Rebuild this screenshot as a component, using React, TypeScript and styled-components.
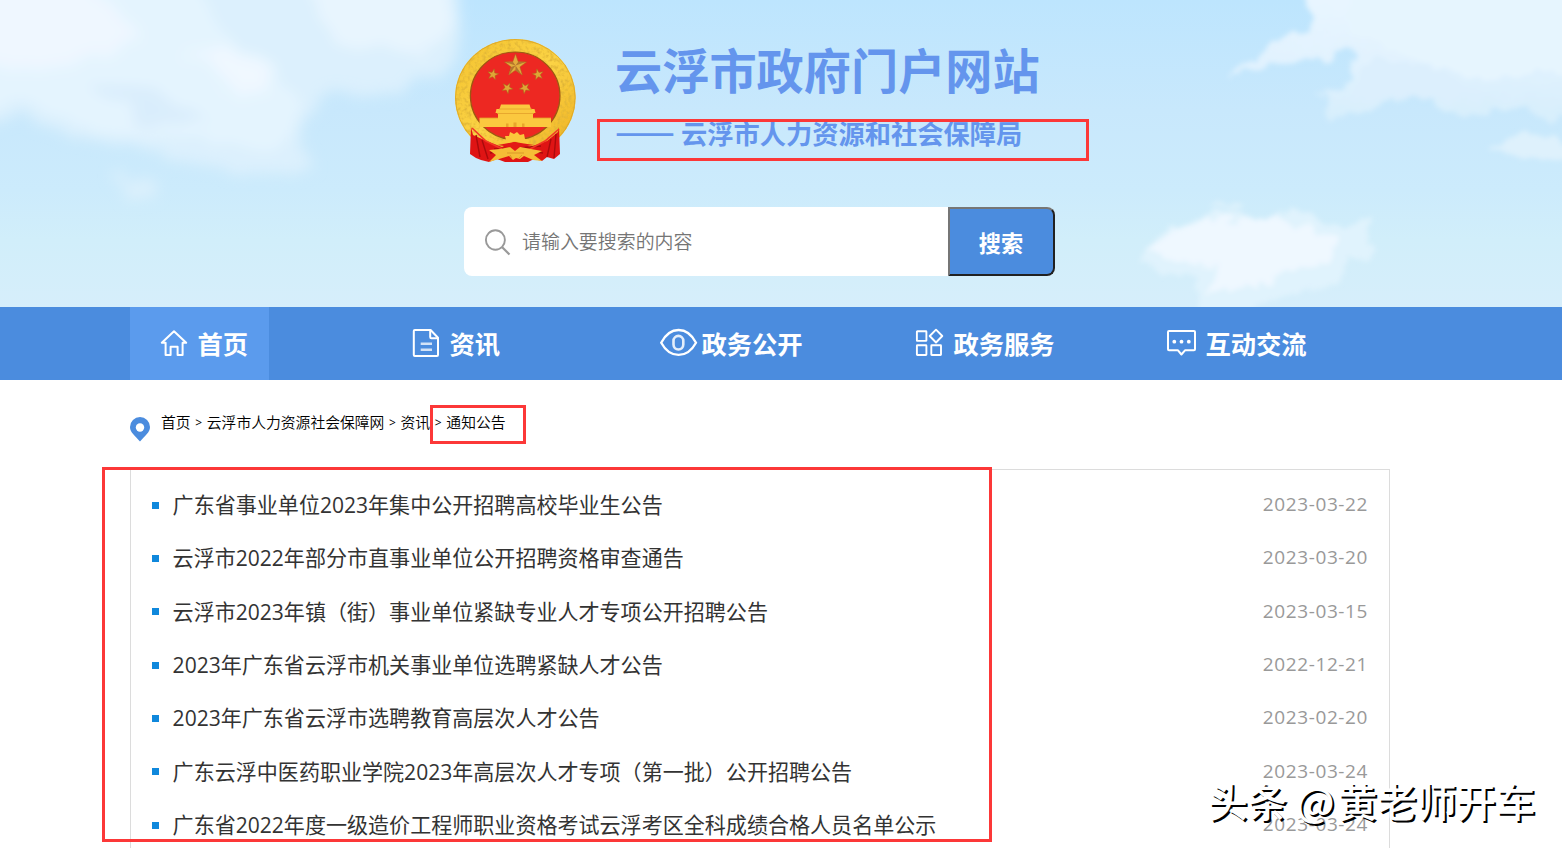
import React from "react";
import styled, { createGlobalStyle } from "styled-components";

const GlobalStyle = createGlobalStyle`
  * { box-sizing: border-box; }
  html, body { margin: 0; padding: 0; }
  body {
    background: #fff;
    font-family: "Open Sans", "Noto Sans CJK SC", sans-serif;
    overflow: hidden;
  }
`;

const Page = styled.div`
  position: relative;
  width: 1562px;
  height: 848px;
  overflow: hidden;
`;

const Header = styled.header`
  position: relative;
  height: 307px;
  background: linear-gradient(#bde5fe 0, #c8e8fc 110px, #ccebfc 190px, #d1eefa 240px, #d6eefb 307px);
`;

const Sky = styled.svg`
  position: absolute;
  inset: 0;
`;

const Brand = styled.div`
  position: relative;
  display: flex;
  gap: 25px;
  padding: 30px 0 0 440px;
`;

const BrandText = styled.div`
  padding-top: 8px;
  color: #6495ed;
  font-family: "Noto Sans CJK SC", sans-serif;
  font-weight: 700;
  white-space: nowrap;
`;

const SiteName = styled.h1`
  margin: 0;
  font-size: 47.2px;
  line-height: 62px;
`;

const Department = styled.div`
  display: flex;
  align-items: center;
  height: 40px;
  margin-top: 13px;
  font-size: 26.25px;
  line-height: 40px;
`;

const Dash = styled.span`
  width: 66px;
  padding-bottom: 6px;
  font-size: 35.5px;
  font-weight: 500;
`;

const Search = styled.form`
  position: relative;
  display: flex;
  align-items: center;
  width: 591px;
  height: 69px;
  margin: 32px 0 0 464px;
  padding-left: 20px;
  background: #fff;
  border-radius: 8px;
`;

const Placeholder = styled.span`
  flex: 1;
  padding: 0 0 2px 10px;
  color: #757575;
  font: 350 18.95px/28px "Noto Sans CJK SC", sans-serif;
`;

const SearchButton = styled.button`
  width: 107px;
  height: 69px;
  padding: 1px 1px 0 0;
  background: #4b8cde;
  border: 2px solid;
  border-color: #767676 #212121 #212121 #767676;
  border-radius: 0 8px 8px 0;
  color: #fff;
  font: 700 22.2px/30px "Noto Sans CJK SC", sans-serif;
`;

const Nav = styled.nav`
  display: flex;
  height: 73px;
  padding-left: 130px;
  background: #4b8cde;
`;

const NavCell = styled.div`
  width: 252px;
`;

const NavLink = styled.a<{ $active?: boolean }>`
  display: inline-flex;
  align-items: center;
  height: 73px;
  padding: 0 21px 0 26px;
  background: ${(p) => (p.$active ? "#5b9bed" : "transparent")};
  color: #fff;
  font: 700 25.3px/36px "Noto Sans CJK SC", sans-serif;
  white-space: nowrap;

  svg { width: 42px; height: 33px; flex: none; margin-right: -0.600px; }
`;

const NavLabel = styled.span`
  padding-bottom: 1px;
`;

const Breadcrumb = styled.div`
  display: flex;
  align-items: flex-start;
  height: 89px;
  padding: 30px 0 0 130px;
  color: #000;
  font: 400 14.8px/24px "Noto Sans CJK SC", sans-serif;
  white-space: nowrap;

  svg { margin: 7px 11px 0 0; }
`;

const Crumb = styled.span`
  font-weight: 350;
`;

const Separator = styled.span`
  width: 16.2px;
  text-align: center;
  font: 400 12px/26px "Open Sans", sans-serif;
`;

const NoticeList = styled.ul`
  width: 1260px;
  height: 400px;
  margin: 0 0 0 130px;
  padding: 8.4px 21px 0 21px;
  border: 1px solid #dcdcdc;
  list-style: none;
`;

const Notice = styled.li`
  display: flex;
  align-items: center;
  height: 53.33px;
`;

const Bullet = styled.i`
  width: 7px;
  height: 7px;
  margin-right: 13.6px;
  background: #0f88dc;
`;

const NoticeTitle = styled.a`
  flex: 1;
  color: #333;
  font-size: 21.06px;
  font-weight: 400;
  line-height: 30px;
  white-space: nowrap;
`;

const NoticeDate = styled.time`
  margin-top: -2px;
  color: #999;
  font-size: 19px;
  letter-spacing: 0.6px;
`;

const Highlight = styled.div<{ $x: number; $y: number; $w: number; $h: number }>`
  position: absolute;
  left: ${(p) => p.$x}px;
  top: ${(p) => p.$y}px;
  width: ${(p) => p.$w}px;
  height: ${(p) => p.$h}px;
  border: 3px solid #fc3838;
`;

const Watermark = styled.div`
  position: absolute;
  left: 1208px;
  top: 772px;
  color: #fff;
  font: 500 39.6px/56px "Noto Sans CJK SC", sans-serif;
  text-shadow: 2px 2px 0.5px #000;
  white-space: nowrap;
`;

const At = styled.span`
  margin-right: 3px;
`;

const Clouds = () => (
  <Sky width="1562" height="307" viewBox="0 0 1562 307">
    <defs>
      <filter id="soft" x="-20%" y="-20%" width="140%" height="140%">
        <feTurbulence type="fractalNoise" baseFrequency="0.02" numOctaves="5" seed="4" result="n" />
        <feDisplacementMap in="SourceGraphic" in2="n" scale="44" xChannelSelector="R" yChannelSelector="G" />
        <feGaussianBlur stdDeviation="7" />
      </filter>
      <filter id="crisp" x="-20%" y="-20%" width="140%" height="140%">
        <feTurbulence type="fractalNoise" baseFrequency="0.05" numOctaves="5" seed="9" result="n" />
        <feDisplacementMap in="SourceGraphic" in2="n" scale="22" xChannelSelector="R" yChannelSelector="G" />
        <feGaussianBlur stdDeviation="2.6" />
      </filter>
      <linearGradient id="fade" x1="0" y1="0" x2="0" y2="1">
        <stop offset="0" stopColor="#eaf6ff" />
        <stop offset="0.6" stopColor="#e1f2fe" />
        <stop offset="1" stopColor="#d6eefc" />
      </linearGradient>
    </defs>
    <g filter="url(#soft)">
      <path d="M-60-60H445L468 25 468 48 440 72 400 88 370 98 335 90 316 100 304 135 308 178 270 168 180 156 120 145 85 128 30 125-60 142Z" fill="#dcf0fd" />
      <path d="M-60-60H190L208 25 235 48 275 62 300 90 295 135 250 150 180 140 120 130 80 112 30 110-60 120Z" fill="#e4f4fe" />
      <path d="M295-60H430L456 18 448 42 405 52 330 42Z" fill="#e8f5fe" />
      <path d="M190 52 265 65 275 96 222 90Z" fill="#f0f8ff" />
      <path d="M-60-60H60L110 10 140 40 75 58 20 72-60 65Z" fill="#eff7ff" />
      <path d="M85 82 150 92 210 118 140 122Z" fill="#d9edfc" />
      <ellipse cx="134" cy="190" rx="20" ry="9" fill="#dcf0fc" />
    </g>
    <g filter="url(#crisp)">
      <path d="M1302-20H1600V120L1545 118 1515 108 1470 116 1438 108 1432 95 1370 106 1330 122 1320 90 1350 82 1354 52 1300 62 1260 72 1228 76 1265 54 1275 42 1305 32 1310 15Z" fill="url(#fade)" />
      <path d="M1375 55 1405 65 1430 72 1480 92 1535 92 1400 99 1350 100Z" fill="#dceffd" />
      <path d="M1345-20H1580V70L1510 78 1440 72 1395 50 1350 30Z" fill="#e6f5fe" />
      <path d="M1490 148 1522 130 1580 145V162L1525 158Z" fill="#def1fc" />
      <path d="M1140 262 1156 236 1178 228 1208 215 1240 212 1262 220 1290 214 1325 224 1348 226 1372 214 1368 258 1350 262 1342 280 1305 290 1270 300 1245 315 1200 315 1198 282 1170 272Z" fill="#e0f3fd" />
      <path d="M1146 250 1178 230 1210 218 1250 219 1290 218 1318 232 1340 236 1326 262 1285 276 1230 292 1205 290 1220 264 1175 262Z" fill="#eff8ff" />
      <ellipse cx="1228" cy="206" rx="18" ry="3" fill="#dff2fc" />
    </g>
  </Sky>
);

const starPoints = (cx: number, cy: number, r: number, turn = 0) =>
  Array.from({ length: 10 }, (_, i) => {
    const a = -Math.PI / 2 + (i * Math.PI) / 5 + turn;
    const q = i % 2 ? r * 0.4 : r;
    return `${(cx + q * Math.cos(a)).toFixed(2)},${(cy + q * Math.sin(a)).toFixed(2)}`;
  }).join(" ");

const Emblem = () => (
  <svg width="150" height="145" viewBox="0 0 150 145">
    <defs>
      <linearGradient id="gold" x1="0" y1="0" x2="1" y2="1">
        <stop offset="0" stopColor="#f3c22f" />
        <stop offset="0.5" stopColor="#fbd345" />
        <stop offset="1" stopColor="#eeb021" />
      </linearGradient>
      <filter id="grain" x="0" y="0" width="100%" height="100%">
        <feTurbulence type="fractalNoise" baseFrequency="0.28" numOctaves="2" seed="3" />
        <feColorMatrix values="0 0 0 0 .74  0 0 0 0 .46  0 0 0 0 .04  2.6 0 0 0 -1.15" />
        <feComposite in2="SourceGraphic" operator="in" result="g" />
        <feMerge><feMergeNode in="SourceGraphic" /><feMergeNode in="g" /></feMerge>
      </filter>
    </defs>
    <ellipse cx="75.3" cy="67.5" rx="60.3" ry="58.5" fill="url(#gold)" filter="url(#grain)" />
    <ellipse cx="75.3" cy="67.5" rx="59.8" ry="58" fill="none" stroke="#dda423" strokeWidth="0.8" />
    <ellipse cx="75.2" cy="65.8" rx="44.8" ry="43.8" fill="#ed2822" stroke="#9c5812" strokeWidth="1.2" />
    <polygon points={starPoints(75.5, 35.5, 11.6)} fill="#e3ac3c" stroke="#a8661a" strokeWidth="0.5" />
    <path d="M75.5 35.5 86 32 78.3 31.7ZM75.5 35.5 82 45 75.5 40.5ZM75.5 35.5 69 45 71 37ZM75.5 35.5 65 32 73 32Z" fill="#b4762c" />
    <g fill="#dfa636" stroke="#a8661a" strokeWidth="0.5">
      <polygon points={starPoints(53, 44.5, 5.8, 0.2)} />
      <polygon points={starPoints(98, 44.5, 5.8, -0.2)} />
      <polygon points={starPoints(67.3, 58, 5.8, 0.5)} />
      <polygon points={starPoints(84.8, 58, 5.8, -0.5)} />
    </g>
    <path d="M61 74.5H89.5L91 79H94.5L95.5 83H93V88H111V97H39.5V88H58V83H55.5L56.5 79H59.5Z" fill="#fbc83f" />
    <path d="M59 79H92M57 83.5H94M39.5 88H58M93 88H111" stroke="#e3a02a" strokeWidth="0.8" />
    <path d="M66 97V93.5H68.5V97M73.5 97V92.5H76.5V97M82 97V93.5H84.5V97" fill="#e8a42b" />
    <path d="M31 97 33 105 49 112 62 117 66 115 75 112 85 115 90 117 107 111 118 102 119 97 120 124 114 129 107 127 102 131 94 129 88 132 65 132 57 129 49 132 41 130 36 128 30 124Z" fill="#df1414" />
    <path d="M36 105 40 127M42 110 48 129M111 109 107 127M116 104 114 128M54 119 78 118 101 116M50 123 70 120M83 120 103 123" fill="none" stroke="#a90b0c" strokeWidth="1.4" />
    <path d="M32 98 46 111 62 119M119 99 105 111 90 119" fill="none" stroke="#f23827" strokeWidth="1.6" />
    <path d="M63 112 66 110 65 106 69 106 70 102 74 104 77 102 80 105 84 104 85 109 89 110 88 115 85 116 82 113 75 111 69 113 65 116Z" fill="#fbc73b" />
    <path d="M49 120 60 119 75 116 91 119 102 121 94 125 102 131 93 130 84 126 80 129 76 128 73 130 69 126 59 129 49 132 56 125Z" fill="#f5bd36" />
    <path d="M58 115 74 112 94 115 80 117 75 121 70 117Z" fill="#e31916" />
    <path d="M67 123 84 123M70 125 72 128M79 128 82 125" stroke="#d08a24" strokeWidth="0.7" />
  </svg>
);

const HomeIcon = () => (
  <svg viewBox="0 0 42 33" fill="none" stroke="#fff" strokeWidth="2" strokeLinejoin="round" strokeLinecap="round">
    <path d="M9.6 15.7H5.8L18 4.2 30.2 15.7H26.6V28H21.6V19.8H14.6V28H9.6Z" />
  </svg>
);

const ArticleIcon = () => (
  <svg viewBox="0 0 42 33" fill="none" stroke="#fff" strokeWidth="2" strokeLinejoin="round">
    <path d="M6.8 3H22.6L30 10.8V28Q30 29 29 29H6.8Q5.8 29 5.8 28V4Q5.8 3 6.8 3Z" />
    <path d="M22.2 3.5V10Q22.2 11.2 23.4 11.2H29.5" />
    <path d="M12.7 16.8H24M12.7 22.8H24" strokeWidth="2.4" strokeOpacity="0.75" />
  </svg>
);

const EyeIcon = () => (
  <svg viewBox="0 0 42 33" fill="none" stroke="#fff" strokeWidth="2.3">
    <path d="M1.2 15.7C5.5 7.5 11.5 3 18.6 3S31.7 7.5 36 15.7C31.7 23.5 25.7 27.9 18.6 27.9S5.5 23.5 1.2 15.7Z" />
    <rect x="13.5" y="8.9" width="9.8" height="13.6" rx="4.9" strokeWidth="2.6" strokeOpacity="0.85" />
  </svg>
);

const ServicesIcon = () => (
  <svg viewBox="0 0 42 33" fill="none" stroke="#fff" strokeWidth="1.9" strokeLinejoin="round">
    <rect x="4.9" y="4.2" width="9.5" height="9.7" rx="0.5" />
    <rect x="4.9" y="18.3" width="9.5" height="9.7" rx="0.5" />
    <rect x="19.3" y="18.3" width="9.7" height="9.7" rx="0.5" />
    <path d="M24 2.7 30.3 9 24 15.5 17.7 9Z" />
  </svg>
);

const ChatIcon = () => (
  <svg viewBox="0 0 42 33" fill="none" stroke="#fff" strokeWidth="2" strokeLinejoin="round">
    <path d="M5 4H30Q31 4 31 5V22.3Q31 23.3 30 23.3H21L17.4 27.5 14 23.3H5Q4 23.3 4 22.3V5Q4 4 5 4Z" />
    <g fill="#fff" stroke="none">
      <circle cx="10.3" cy="14.7" r="1.9" />
      <circle cx="17.5" cy="14.7" r="1.9" />
      <circle cx="24.8" cy="14.7" r="1.9" />
    </g>
  </svg>
);

const SearchIcon = () => (
  <svg width="28" height="28" viewBox="0 0 28 28" fill="none" stroke="#999" strokeWidth="1.9">
    <ellipse cx="11.4" cy="12" rx="9.5" ry="9.7" />
    <path d="M18 19 25.5 26.5" strokeWidth="2.2" />
  </svg>
);

const PinIcon = () => (
  <svg width="20" height="25" viewBox="0 0 20 25">
    <path d="M10 0A10 10 0 0 0 0 10C0 15.5 5 18.5 10 24.5C15 18.5 20 15.5 20 10A10 10 0 0 0 10 0Z" fill="#4b8cde" />
    <circle cx="10" cy="10.5" r="4.2" fill="#fff" />
  </svg>
);

const navItems = [
  { label: "首页", Icon: HomeIcon, active: true },
  { label: "资讯", Icon: ArticleIcon },
  { label: "政务公开", Icon: EyeIcon },
  { label: "政务服务", Icon: ServicesIcon },
  { label: "互动交流", Icon: ChatIcon },
];

const crumbs = ["首页", "云浮市人力资源社会保障网", "资讯", "通知公告"];

const notices = [
  ["广东省事业单位2023年集中公开招聘高校毕业生公告", "2023-03-22"],
  ["云浮市2022年部分市直事业单位公开招聘资格审查通告", "2023-03-20"],
  ["云浮市2023年镇（街）事业单位紧缺专业人才专项公开招聘公告", "2023-03-15"],
  ["2023年广东省云浮市机关事业单位选聘紧缺人才公告", "2022-12-21"],
  ["2023年广东省云浮市选聘教育高层次人才公告", "2023-02-20"],
  ["广东云浮中医药职业学院2023年高层次人才专项（第一批）公开招聘公告", "2023-03-24"],
  ["广东省2022年度一级造价工程师职业资格考试云浮考区全科成绩合格人员名单公示", "2023-03-24"],
];

export default function App() {
  return (
    <Page>
      <GlobalStyle />
      <Header>
        <Clouds />
        <Brand>
          <Emblem />
          <BrandText>
            <SiteName>云浮市政府门户网站</SiteName>
            <Department>
              <Dash>——</Dash>
              <span>云浮市人力资源和社会保障局</span>
            </Department>
          </BrandText>
        </Brand>
        <Search>
          <SearchIcon />
          <Placeholder>请输入要搜索的内容</Placeholder>
          <SearchButton type="button">搜索</SearchButton>
        </Search>
      </Header>
      <Nav>
        {navItems.map(({ label, Icon, active }) => (
          <NavCell key={label}>
            <NavLink $active={active}>
              <Icon />
              <NavLabel>{label}</NavLabel>
            </NavLink>
          </NavCell>
        ))}
      </Nav>
      <Breadcrumb>
        <PinIcon />
        {crumbs.map((c, i) => (
          <React.Fragment key={c}>
            {i > 0 && <Separator>&gt;</Separator>}
            <Crumb>{c}</Crumb>
          </React.Fragment>
        ))}
      </Breadcrumb>
      <NoticeList>
        {notices.map(([title, date]) => (
          <Notice key={title}>
            <Bullet />
            <NoticeTitle>{title}</NoticeTitle>
            <NoticeDate>{date}</NoticeDate>
          </Notice>
        ))}
      </NoticeList>
      <Highlight $x={597} $y={119} $w={492} $h={42} />
      <Highlight $x={430} $y={405} $w={96} $h={39} />
      <Highlight $x={102} $y={467} $w={890} $h={375} />
      <Watermark>
        头条 <At>@</At>黄老师开车
      </Watermark>
    </Page>
  );
}
